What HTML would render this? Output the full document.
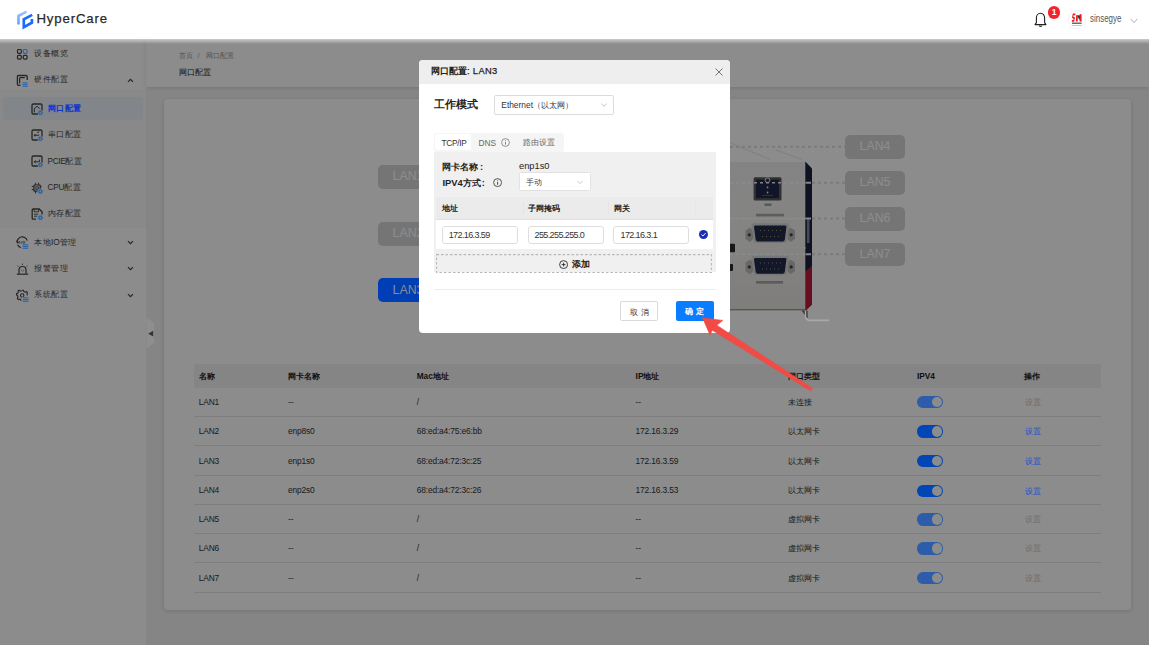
<!DOCTYPE html>
<html><head><meta charset="utf-8">
<style>
*{box-sizing:border-box;}
html,body{margin:0;padding:0;}
body{width:1149px;height:645px;overflow:hidden;position:relative;background:#f3f3f3;font-family:"Liberation Sans",sans-serif;color:#333;}
.abs{position:absolute;}
.t{position:absolute;white-space:nowrap;line-height:1;}
.ov{z-index:10;}
#sidebar{position:absolute;left:0;top:39px;width:146px;height:606px;background:#fff;}
.mi{position:absolute;font-size:8.3px;letter-spacing:0.55px;color:#444;white-space:nowrap;line-height:1;}
#crumb{position:absolute;left:146px;top:39px;width:1003px;box-shadow:0 1px 4px rgba(0,0,0,.12);height:48px;background:#fff;}
#card{position:absolute;left:164px;top:99px;width:967px;height:511px;background:#fff;border-radius:4px;box-shadow:0 1px 5px rgba(0,0,0,.14);}
.lanbtn{position:absolute;width:60px;height:23.5px;border-radius:5px;background:#d6d6d6;color:#fff;font-size:12.3px;line-height:23.5px;text-align:center;}
.th{position:absolute;top:364px;height:24px;left:194px;width:907px;background:#f2f2f2;}
.ht{position:absolute;font-size:8.3px;font-weight:bold;color:#222;white-space:nowrap;line-height:1;}
.td{position:absolute;font-size:8.4px;letter-spacing:-0.15px;color:#333;white-space:nowrap;line-height:1;}
.rl{position:absolute;left:194px;width:907px;height:1px;background:#e6e6e6;}
.sw{position:absolute;width:26.2px;height:12.6px;border-radius:6.3px;background:rgb(0,70,180);z-index:10;}
.sw:after{content:"";position:absolute;right:1.1px;top:1.1px;width:10.4px;height:10.4px;border-radius:50%;background:rgb(140,140,140);}
.sw.dis{background:rgb(45,92,170);}
.lnk{position:absolute;font-size:8.3px;color:rgb(25,80,200);white-space:nowrap;line-height:1;z-index:10;}
.lnkd{position:absolute;font-size:8.3px;color:#c8c8c8;white-space:nowrap;line-height:1;}
#mask{position:absolute;left:0;top:39px;width:1149px;height:606px;background:rgba(0,0,0,.45);z-index:5;}
#header{position:absolute;left:0;top:0;width:1149px;height:39px;background:#fff;z-index:20;}
#hshadow{position:absolute;left:0;top:39px;width:1149px;height:5px;background:linear-gradient(rgba(255,255,255,.55),rgba(255,255,255,0));z-index:6;}
#modal{position:absolute;left:419px;top:60px;width:311px;height:273px;background:#fff;border-radius:4px;overflow:hidden;z-index:20;}
#arrow{z-index:30;}
</style></head><body>
<div id="sidebar">
  <div class="abs" style="left:0;top:50px;width:146px;height:138.6px;background:#f9f9f9;"></div>
  <div class="abs" style="left:2.6px;top:58px;width:140.8px;height:23px;background:#edf2fc;border-radius:4px;"></div>
</div>
<div class="mi" style="left:34px;top:48.8px;">设备概览</div>
<div class="mi" style="left:34px;top:75.3px;">硬件配置</div>
<div class="mi ov" style="left:47.5px;top:103.8px;color:rgb(12,52,205);font-weight:bold;">网口配置</div>
<div class="mi" style="left:47.5px;top:130.3px;">串口配置</div>
<div class="mi" style="left:47.5px;top:156.6px;"><span style="letter-spacing:-0.35px">PCIE</span>配置</div>
<div class="mi" style="left:47.5px;top:182.9px;"><span style="letter-spacing:-0.3px">CPU</span>配置</div>
<div class="mi" style="left:47.5px;top:209.1px;">内存配置</div>
<div class="mi" style="left:34px;top:237.8px;">本地<span style="letter-spacing:-0.1px">IO</span>管理</div>
<div class="mi" style="left:34px;top:264.0px;">报警管理</div>
<div class="mi" style="left:34px;top:290.3px;">系统配置</div>
<!-- SIDEBAR ICONS -->
<svg class="abs ov" style="left:16px;top:47.5px;" width="13" height="13" viewBox="0 0 13 13">
 <rect x="1.5" y="1.5" width="3.8" height="3.8" rx="1" stroke="#262626" stroke-width="1.2" fill="none"/>
 <rect x="7.3" y="1.5" width="3.8" height="3.8" rx="1" stroke="#2a66ad" stroke-width="1.2" fill="none"/>
 <rect x="1.5" y="7.3" width="3.8" height="3.8" rx="1" stroke="#262626" stroke-width="1.2" fill="none"/>
 <rect x="7.3" y="7.3" width="3.8" height="3.8" rx="1" stroke="#262626" stroke-width="1.2" fill="none"/>
</svg>
<svg class="abs ov" style="left:16px;top:74px;" width="13" height="13" viewBox="0 0 13 13">
 <path d="M4.5 11.4H2.5Q1.4 11.4 1.4 10.3V2.6Q1.4 1.5 2.5 1.5H10.1Q11.2 1.5 11.2 2.6V6" stroke="#262626" stroke-width="1.3" fill="none"/>
 <path d="M3.6 9.6V4.6Q3.6 3.7 4.5 3.7H8.8" stroke="#262626" stroke-width="1.2" fill="none"/>
 <rect x="6" y="7.6" width="6.5" height="5" fill="rgb(140,140,140)"/><rect x="6.6" y="8.3" width="5" height="1.1" fill="#2a66ad"/><rect x="6.6" y="10.05" width="5" height="1.1" fill="#2a66ad"/><rect x="6.6" y="11.8" width="5" height="1.1" fill="#2a66ad"/>
</svg>
<svg class="abs ov" style="left:30.5px;top:102.5px;" width="13" height="13" viewBox="0 0 13 13">
 <rect x="1" y="1" width="10" height="10" rx="1.3" stroke="#262626" stroke-width="1.3" fill="none"/>
 <path d="M3.3 9.3V5.6L6 3.3L8.7 5.6" stroke="#262626" stroke-width="1" fill="none"/><circle cx="9.4" cy="9.7" r="2.9" fill="rgb(130,133,139)"/><circle cx="9.4" cy="9.7" r="1.45" fill="none" stroke="#2a66ad" stroke-width="1.3"/><circle cx="9.4" cy="9.7" r="2.2" fill="none" stroke="#2a66ad" stroke-width="0.9" stroke-dasharray="0.9 0.75"/>
</svg>
<svg class="abs ov" style="left:30.5px;top:128.8px;" width="13" height="13" viewBox="0 0 13 13">
 <rect x="1" y="1" width="10" height="10" rx="1.3" stroke="#262626" stroke-width="1.3" fill="none"/>
 <path d="M2.8 6.2H8.2M4 5V7.4M6.2 3.6L8.2 2.8" stroke="#262626" stroke-width="1" fill="none"/><circle cx="9.4" cy="9.7" r="2.9" fill="rgb(137,137,137)"/><circle cx="9.4" cy="9.7" r="1.45" fill="none" stroke="#2a66ad" stroke-width="1.3"/><circle cx="9.4" cy="9.7" r="2.2" fill="none" stroke="#2a66ad" stroke-width="0.9" stroke-dasharray="0.9 0.75"/>
</svg>
<svg class="abs ov" style="left:30.5px;top:155.3px;" width="13" height="13" viewBox="0 0 13 13">
 <rect x="1" y="1" width="10" height="10" rx="1.3" stroke="#262626" stroke-width="1.3" fill="none"/>
 <path d="M3.2 6.8H8.4V4.6M3.2 6.8L4.6 5.6M3.2 6.8L4.6 8" stroke="#262626" stroke-width="1" fill="none"/><circle cx="9.4" cy="9.7" r="2.9" fill="rgb(137,137,137)"/><circle cx="9.4" cy="9.7" r="1.45" fill="none" stroke="#2a66ad" stroke-width="1.3"/><circle cx="9.4" cy="9.7" r="2.2" fill="none" stroke="#2a66ad" stroke-width="0.9" stroke-dasharray="0.9 0.75"/>
</svg>
<svg class="abs ov" style="left:30.5px;top:181.5px;" width="13" height="13" viewBox="0 0 13 13">
 <rect x="3" y="3" width="6.2" height="6.2" rx="0.6" stroke="#262626" stroke-width="1.2" fill="none"/>
 <rect x="4.9" y="4.9" width="2.4" height="2.4" stroke="#262626" stroke-width="0.9" fill="none"/>
 <path d="M4.6 0.8V3M7.6 0.8V3M4.6 9.2V11.4M0.8 4.6H3M0.8 7.6H3M9.2 4.6H10.6" stroke="#262626" stroke-width="1" fill="none"/><circle cx="9.4" cy="9.6" r="2.9" fill="rgb(137,137,137)"/><circle cx="9.4" cy="9.6" r="1.45" fill="none" stroke="#2a66ad" stroke-width="1.3"/><circle cx="9.4" cy="9.6" r="2.2" fill="none" stroke="#2a66ad" stroke-width="0.9" stroke-dasharray="0.9 0.75"/>
</svg>
<svg class="abs ov" style="left:30.5px;top:207.5px;" width="13" height="13" viewBox="0 0 13 13">
 <path d="M5 11.2H2.2Q1.2 11.2 1.2 10.2V2Q1.2 1 2.2 1H8.2L11 3.8V6.5" stroke="#262626" stroke-width="1.3" fill="none"/>
 <path d="M3.2 1.2V3.8H7.6V1.2M3 6.2H7.2M3 8.2H6.2" stroke="#262626" stroke-width="0.9" fill="none"/><circle cx="9.4" cy="9.7" r="2.9" fill="rgb(137,137,137)"/><circle cx="9.4" cy="9.7" r="1.45" fill="none" stroke="#2a66ad" stroke-width="1.3"/><circle cx="9.4" cy="9.7" r="2.2" fill="none" stroke="#2a66ad" stroke-width="0.9" stroke-dasharray="0.9 0.75"/>
</svg>
<svg class="abs ov" style="left:16px;top:236px;" width="13" height="13" viewBox="0 0 13 13">
 <path d="M1.4 7.2A5 5 0 0 1 11.2 4.6" stroke="#262626" stroke-width="1.2" fill="none"/>
 <path d="M1.6 8.8A5 5 0 0 0 4.8 11.6" stroke="#262626" stroke-width="1.2" fill="none"/>
 <path d="M0.6 4.6L1.8 7.2L3.6 5.2" stroke="#262626" stroke-width="1" fill="none"/>
 <path d="M3.8 5.3V7.6M5.2 7.6L6 5.3M6.8 6.4A1 1 0 1 0 8.8 6.4A1 1 0 1 0 6.8 6.4" stroke="#262626" stroke-width="0.7" fill="none"/>
 <rect x="6" y="7.9" width="6.8" height="5" fill="rgb(137,137,137)"/>
 <rect x="6.6" y="8.2" width="5.6" height="1.1" fill="#2a66ad"/><rect x="6.6" y="9.95" width="5.6" height="1.1" fill="#2a66ad"/><rect x="6.6" y="11.7" width="5.6" height="1.1" fill="#2a66ad"/>
</svg>
<svg class="abs ov" style="left:16px;top:262.5px;" width="13" height="13" viewBox="0 0 13 13">
 <path d="M3 10.8V7A3.5 3.5 0 0 1 10 7V10.8" stroke="#262626" stroke-width="1.2" fill="none"/>
 <path d="M0.8 11.2H12.2" stroke="#262626" stroke-width="1.2" fill="none"/>
 <path d="M6.5 0.6V2M1.4 2.6L2.4 3.6M11.6 2.6L10.6 3.6" stroke="#262626" stroke-width="0.9" fill="none"/>
 <path d="M4.6 7.4Q6.5 5.4 8.4 7.4Q6.5 9.4 4.6 7.4Z" fill="#2a66ad"/><circle cx="6.5" cy="7.4" r="0.6" fill="rgb(137,137,137)"/>
</svg>
<svg class="abs ov" style="left:16px;top:288.5px;" width="13" height="13" viewBox="0 0 13 13">
 <path d="M5.6 1.2H7.4L7.8 2.6L9.2 3.2L10.5 2.5L11.6 3.8L10.9 5.1L11.4 6.4M5 11.8L4.8 10.6L3.6 10L2.3 10.6L1.3 9.3L2 8L1.6 6.6L0.5 6.1V4.5L1.9 4.1L2.4 2.9L1.8 1.8M1.8 1.8L3.1 1.2L4.2 2.2L5.4 1.9" stroke="#262626" stroke-width="1.1" fill="none" stroke-linejoin="round"/>
 <circle cx="6.2" cy="6.5" r="1.7" stroke="#262626" stroke-width="1.1" fill="none"/>
 <rect x="6.2" y="7.8" width="6.8" height="5.2" fill="rgb(137,137,137)"/>
 <rect x="6.9" y="8.3" width="5.6" height="1.1" fill="#2a66ad"/><rect x="6.9" y="10.05" width="5.6" height="1.1" fill="#2a66ad"/><rect x="6.9" y="11.8" width="5.6" height="1.1" fill="#2a66ad"/>
</svg>
<svg class="abs ov" style="left:126.5px;top:77.5px;" width="7" height="5" viewBox="0 0 7 5"><path d="M1 3.8L3.5 1.3L6 3.8" stroke="#262626" stroke-width="1.2" fill="none"/></svg>
<svg class="abs ov" style="left:126.5px;top:240px;" width="7" height="5" viewBox="0 0 7 5"><path d="M1 1.2L3.5 3.7L6 1.2" stroke="#262626" stroke-width="1.2" fill="none"/></svg>
<svg class="abs ov" style="left:126.5px;top:266.2px;" width="7" height="5" viewBox="0 0 7 5"><path d="M1 1.2L3.5 3.7L6 1.2" stroke="#262626" stroke-width="1.2" fill="none"/></svg>
<svg class="abs ov" style="left:126.5px;top:292.5px;" width="7" height="5" viewBox="0 0 7 5"><path d="M1 1.2L3.5 3.7L6 1.2" stroke="#262626" stroke-width="1.2" fill="none"/></svg>
<svg class="abs ov" style="left:146px;top:317px;" width="9" height="33" viewBox="0 0 9 33">
 <path d="M0.5 0L8 6V26L0.5 32Z" fill="rgb(142,142,142)"/>
 <path d="M2.2 16.8L7.2 13.8V19.4Z" fill="#333"/>
</svg>

<div id="crumb"></div>
<div class="t" style="left:179px;top:52px;font-size:7.2px;color:#999;">首页</div><div class="t" style="left:197.5px;top:52px;font-size:7.2px;color:#999;">/</div><div class="t" style="left:205.8px;top:52px;font-size:7.2px;color:#999;">网口配置</div>
<div class="t" style="left:179px;top:68px;font-size:8.3px;color:#222;">网口配置</div>
<div id="card"></div>
<div class="lanbtn" style="left:378px;top:165px;">LAN1</div>
<div class="lanbtn" style="left:378px;top:222px;">LAN2</div>
<div class="lanbtn ov" style="left:378px;top:278px;height:24px;line-height:24px;background:rgb(0,62,182);color:rgb(140,140,140);">LAN3</div>
<div class="lanbtn" style="left:845px;top:135px;">LAN4</div>
<div class="lanbtn" style="left:845px;top:171px;">LAN5</div>
<div class="lanbtn" style="left:845px;top:207px;">LAN6</div>
<div class="lanbtn" style="left:845px;top:242.5px;">LAN7</div>
<!-- DEVICE -->
<svg class="abs" style="left:700px;top:100px;" width="220" height="240" viewBox="700 100 220 240">
 <defs>
  <linearGradient id="pg" x1="0" y1="0" x2="0" y2="1"><stop offset="0" stop-color="#efefef"/><stop offset="0.5" stop-color="#f2f1ef"/><stop offset="1" stop-color="#e6e4e0"/></linearGradient>
  <radialGradient id="scr" cx="0.5" cy="0.5" r="0.5"><stop offset="0" stop-color="#555"/><stop offset="0.35" stop-color="#666"/><stop offset="0.45" stop-color="#ddd"/><stop offset="1" stop-color="#aaa"/></radialGradient>
 </defs>
 <path d="M731 143.2L770 159.5M776 150L802.4 159.5" stroke="#c6dcec" stroke-width="0.6" fill="none"/>
 <path d="M700 162H806V310.5H700Z" fill="url(#pg)"/>
 <path d="M700 309.6H806" stroke="#9a9a9a" stroke-width="1.2"/>
 <path d="M805.3 161.5L812 168.5V267L805.3 272Z" fill="#1c2240"/>
 <path d="M805.3 272L812 265.5V304.8L806 310.5H805.3Z" fill="#c01a3a"/>
   <rect x="753.6" y="177.3" width="27.9" height="23.2" rx="1.5" fill="#5a5a5a"/>
 <rect x="756" y="179.6" width="23" height="18.6" fill="#1e2848"/>
 <circle cx="767.5" cy="180.2" r="2.4" fill="none" stroke="#f2f2f2" stroke-width="0.9"/>
 <rect x="766.8" y="186.5" width="1.5" height="1.8" fill="#eee"/><rect x="766.8" y="191.6" width="1.5" height="1.8" fill="#eee"/>
 <path d="M762 195.5H773" stroke="#8fa0c0" stroke-width="0.4"/>
 <rect x="764.5" y="203.5" width="7" height="2.4" fill="#8a8a8a" opacity="0.8"/>
 <rect x="756" y="213.8" width="28" height="2.6" fill="#8a8a8a" opacity="0.7"/>
 <path d="M700 218.7H806" stroke="#fbfbfb" stroke-width="1"/>
 <path d="M700 248H806" stroke="#f4f4f4" stroke-width="0.8"/>
 <path d="M745.5 230.5L750 227.5L753 230.5V239L750 242L745.5 239Z" fill="#bdbdbd"/><circle cx="749.3" cy="234.8" r="1.6" fill="#444"/>
 <path d="M795 230.5L790.5 227.5L787.5 230.5V239L790.5 242L795 239Z" fill="#bdbdbd"/><circle cx="791.2" cy="234.8" r="1.6" fill="#444"/>
 <path d="M751.5 225.5Q751.5 223.2 754 223.2H786.5Q789 223.2 789 225.5L787 240.8Q786.6 243 784.2 243H756.3Q753.9 243 753.5 240.8Z" fill="#d8d8d8"/>
 <path d="M754 227Q754 225.6 755.6 225.6H785Q786.6 225.6 786.4 227L784.8 239.8Q784.5 241.5 782.8 241.5H757.8Q756 241.5 755.7 239.8Z" fill="#222c4e"/>
 <path d="M760 230.5H781M762 236.5H779" stroke="#b0a070" stroke-width="0.9" stroke-dasharray="1 3" fill="none"/>
 <path d="M745.5 262.6L750 259.6L753 262.6V271.2L750 274.2L745.5 271.2Z" fill="#bdbdbd"/><circle cx="749.3" cy="266.9" r="1.6" fill="#444"/>
 <path d="M795 262.6L790.5 259.6L787.5 262.6V271.2L790.5 274.2L795 271.2Z" fill="#bdbdbd"/><circle cx="791.2" cy="266.9" r="1.6" fill="#444"/>
 <path d="M751.5 258Q751.5 255.7 754 255.7H786.5Q789 255.7 789 258L787 273Q786.6 275.2 784.2 275.2H756.3Q753.9 275.2 753.5 273Z" fill="#d8d8d8"/>
 <path d="M754 259.5Q754 258.1 755.6 258.1H785Q786.6 258.1 786.4 259.5L784.8 272Q784.5 273.7 782.8 273.7H757.8Q756 273.7 755.7 272Z" fill="#222c4e"/>
 <path d="M760 263H781M762 269H779" stroke="#b0a070" stroke-width="0.9" stroke-dasharray="1 3" fill="none"/>
 <rect x="756" y="281" width="27" height="2.6" fill="#8a8a8a" opacity="0.7"/>
 <rect x="729" y="243.8" width="6" height="8.4" rx="1" fill="#2a2a2a"/><rect x="729" y="264" width="4" height="7" rx="1" fill="#2a2a2a"/>
 <rect x="806.9" y="218" width="2.6" height="25" fill="#c8c8d8" opacity="0.6"/>
 <path d="M700 146.8H845M812 182.7H845M812 218.5H845M812 254.3H845" stroke="#dedede" stroke-width="2" stroke-dasharray="3 3" fill="none"/>
 <path d="M700 182.7H805M700 218.5H805M700 254.3H805" stroke="#ffffff" stroke-width="1.6" stroke-dasharray="3 3" fill="none" opacity="0.9"/>
 <path d="M805.5 182.7H811M805.5 218.5H811M805.5 254.3H811" stroke="#f4f4f4" stroke-width="2" fill="none"/>
</svg>

<svg class="abs ov" style="left:795px;top:305px;" width="40" height="20" viewBox="795 305 40 20">
 <path d="M801.5 310.6L807.6 318.8V310.6Z" fill="#3a3a3a"/>
 <path d="M806.2 310.6V317.6L809 319.6H829.2V321.2H808.2L804.8 318.4V310.6Z" fill="rgb(168,168,166)"/>
</svg>
<div class="th"></div>
<div class="ht" style="left:198.7px;top:372px;">名称</div><div class="ht" style="left:288px;top:372px;">网卡名称</div><div class="ht" style="left:416.7px;top:372px;">Mac地址</div><div class="ht" style="left:635.6px;top:372px;">IP地址</div><div class="ht" style="left:788px;top:372px;">网口类型</div><div class="ht" style="left:917px;top:372px;">IPV4</div><div class="ht" style="left:1024.2px;top:372px;">操作</div><div class="rl" style="top:415.9px;"></div><div class="td" style="left:198.7px;top:397.7px;">LAN1</div><div class="td" style="left:288px;top:397.7px;">--</div><div class="td" style="left:416.7px;top:397.7px;">/</div><div class="td" style="left:635.6px;top:397.7px;">--</div><div class="td" style="left:788px;top:397.7px;">未连接</div><div class="sw dis" style="left:916.8px;top:395.8px;"></div><div class="lnkd" style="left:1024.6px;top:397.8px;">设置</div>
<div class="rl" style="top:445.0px;"></div><div class="td" style="left:198.7px;top:427.2px;">LAN2</div><div class="td" style="left:288px;top:427.2px;">enp8s0</div><div class="td" style="left:416.7px;top:427.2px;">68:ed:a4:75:e6:bb</div><div class="td" style="left:635.6px;top:427.2px;">172.16.3.29</div><div class="td" style="left:788px;top:427.2px;">以太网卡</div><div class="sw" style="left:916.8px;top:425.3px;"></div><div class="lnk" style="left:1024.6px;top:427.3px;">设置</div>
<div class="rl" style="top:475.0px;"></div><div class="td" style="left:198.7px;top:456.8px;">LAN3</div><div class="td" style="left:288px;top:456.8px;">enp1s0</div><div class="td" style="left:416.7px;top:456.8px;">68:ed:a4:72:3c:25</div><div class="td" style="left:635.6px;top:456.8px;">172.16.3.59</div><div class="td" style="left:788px;top:456.8px;">以太网卡</div><div class="sw" style="left:916.8px;top:454.9px;"></div><div class="lnk" style="left:1024.6px;top:456.9px;">设置</div>
<div class="rl" style="top:504.2px;"></div><div class="td" style="left:198.7px;top:486.4px;">LAN4</div><div class="td" style="left:288px;top:486.4px;">enp2s0</div><div class="td" style="left:416.7px;top:486.4px;">68:ed:a4:72:3c:26</div><div class="td" style="left:635.6px;top:486.4px;">172.16.3.53</div><div class="td" style="left:788px;top:486.4px;">以太网卡</div><div class="sw" style="left:916.8px;top:484.5px;"></div><div class="lnk" style="left:1024.6px;top:486.5px;">设置</div>
<div class="rl" style="top:532.9px;"></div><div class="td" style="left:198.7px;top:515.3px;">LAN5</div><div class="td" style="left:288px;top:515.3px;">--</div><div class="td" style="left:416.7px;top:515.3px;">/</div><div class="td" style="left:635.6px;top:515.3px;">--</div><div class="td" style="left:788px;top:515.3px;">虚拟网卡</div><div class="sw dis" style="left:916.8px;top:513.4px;"></div><div class="lnkd" style="left:1024.6px;top:515.4px;">设置</div>
<div class="rl" style="top:562.1px;"></div><div class="td" style="left:198.7px;top:544.3px;">LAN6</div><div class="td" style="left:288px;top:544.3px;">--</div><div class="td" style="left:416.7px;top:544.3px;">/</div><div class="td" style="left:635.6px;top:544.3px;">--</div><div class="td" style="left:788px;top:544.3px;">虚拟网卡</div><div class="sw dis" style="left:916.8px;top:542.4px;"></div><div class="lnkd" style="left:1024.6px;top:544.4px;">设置</div>
<div class="rl" style="top:591.7px;"></div><div class="td" style="left:198.7px;top:573.7px;">LAN7</div><div class="td" style="left:288px;top:573.7px;">--</div><div class="td" style="left:416.7px;top:573.7px;">/</div><div class="td" style="left:635.6px;top:573.7px;">--</div><div class="td" style="left:788px;top:573.7px;">虚拟网卡</div><div class="sw dis" style="left:916.8px;top:571.8px;"></div><div class="lnkd" style="left:1024.6px;top:573.8px;">设置</div>
<div id="mask"></div>
<div id="hshadow"></div>
<!-- HEADER -->
<div id="header">
  <svg class="abs" style="left:14px;top:8px;" width="22" height="23" viewBox="14 8 22 23">
    <defs><linearGradient id="lg1" x1="0" y1="0" x2="0" y2="1"><stop offset="0" stop-color="#9cc4ff"/><stop offset="1" stop-color="#5e9dff"/></linearGradient></defs>
    <path d="M18.5 24.6V15.9L26.6 11.6" stroke="url(#lg1)" stroke-width="2.6" fill="none" stroke-linejoin="miter"/>
    <path d="M32.2 14.9L23.8 19.3V27.2L31.9 22.8V19.1" stroke="#1a6cff" stroke-width="2.7" fill="none" stroke-linejoin="miter"/>
  </svg>
  <div class="t" style="left:36.5px;top:11.5px;font-size:13.2px;color:#2a2a2a;letter-spacing:0.85px;-webkit-text-stroke:0.25px #2a2a2a;">HyperCare</div>
  <svg class="abs" style="left:1034px;top:12px;" width="13" height="16" viewBox="0 0 13 16">
    <path d="M6.5 1.2C4 1.2 2.4 3.2 2.4 5.8V10.6L1 12.6H12L10.6 10.6V5.8C10.6 3.2 9 1.2 6.5 1.2Z" stroke="#222" stroke-width="1.1" fill="none" stroke-linejoin="round"/>
    <path d="M5.2 13.6Q6.5 15.2 7.8 13.6" stroke="#222" stroke-width="1.1" fill="none"/>
  </svg>
  <div class="abs" style="left:1048px;top:6.3px;width:12.3px;height:12.3px;border-radius:50%;background:#f5222d;"></div>
  <div class="t" style="left:1048px;top:8.4px;width:12.3px;text-align:center;font-size:8.6px;font-weight:bold;color:#fff;">1</div>
  <div class="abs" style="left:1067.5px;top:10.4px;width:18.3px;height:18.3px;border-radius:50%;background:#fff;border:0.5px solid #f3f3f3;"></div>
  <svg class="abs" style="left:1068px;top:10px;" width="18" height="18" viewBox="1068 10 18 18">
    <path d="M1075.6 13.4L1075.2 15.2H1073.6L1073.2 16.6L1075 17.4L1074.2 21.8H1071.6L1072 20H1073.4L1073.6 18.8L1072 18L1072.8 13.4Z" fill="#ee1c25"/>
    <path d="M1076.2 15.6H1077.6L1078.8 19.6V15.6H1078.2Z" fill="#222"/>
    <path d="M1076 15.2H1077.8V21.6H1076Z" fill="#ee1c25"/>
    <path d="M1079.6 14.2H1081.6V21.6H1079.6Z" fill="#ee1c25"/>
    <path d="M1077.6 15.4L1079.8 20.2V15.4Z" fill="#222"/>
    <rect x="1072" y="22.6" width="9.6" height="1.2" fill="#444"/>
    <rect x="1072" y="25.2" width="9.6" height="0.8" fill="#f7a0a0"/>
  </svg>
  <div class="t" style="left:1089.5px;top:13.6px;font-size:10.2px;color:#555;transform:scaleX(0.78);transform-origin:0 0;">sinsegye</div>
  <svg class="abs" style="left:1130px;top:18px;" width="8" height="6" viewBox="0 0 8 6"><path d="M0.5 0.8L4 4.6L7.5 0.8" stroke="#999" stroke-width="0.8" fill="none"/></svg>
</div>

<!-- MODAL -->
<div id="modal">
  <div class="abs" style="left:0;top:0;width:311px;height:23.5px;background:#eeeeee;"></div>
  <div class="t" style="left:12px;top:6.9px;font-size:9.3px;color:#222;"><b>网口配置</b><span style="letter-spacing:0.35px;-webkit-text-stroke:0.25px #222;">: LAN3</span></div>
  <svg class="abs" style="left:295.5px;top:8px;" width="8" height="8" viewBox="0 0 8 8"><path d="M0.5 0.5L7.5 7.5M7.5 0.5L0.5 7.5" stroke="#666" stroke-width="0.9" fill="none"/></svg>
  <div class="t" style="left:14.5px;top:39px;font-size:10.55px;font-weight:bold;color:#222;">工作模式</div>
  <div class="abs" style="left:75px;top:35px;width:120px;height:19.5px;border:1px solid #dcdcdc;border-radius:2px;"></div>
  <div class="t" style="left:82.3px;top:40.5px;font-size:8.4px;color:#333;">Ethernet（以太网）</div>
  <svg class="abs" style="left:182px;top:42.5px;" width="6" height="4" viewBox="0 0 6 4"><path d="M0.3 0.5L3 3.3L5.7 0.5" stroke="#aaa" stroke-width="0.7" fill="none"/></svg>

  <div class="abs" style="left:14.6px;top:72.7px;width:130px;height:19px;background:#f5f5f5;border-radius:3px;"></div>
  <div class="abs" style="left:15.7px;top:73.8px;width:36.7px;height:16.4px;background:#fff;border-radius:2px;"></div>
  <div class="t" style="left:22.4px;top:78.5px;font-size:8.3px;color:#333;letter-spacing:-0.25px;">TCP/IP</div>
  <div class="t" style="left:59.6px;top:78.5px;font-size:8.3px;color:#666;">DNS</div>
  <svg class="abs" style="left:81.9px;top:77.5px;" width="9" height="9" viewBox="0 0 9 9"><circle cx="4.5" cy="4.5" r="3.9" stroke="#777" stroke-width="0.8" fill="none"/><path d="M4.5 3.8V6.6M4.5 2.3V3" stroke="#777" stroke-width="0.9"/></svg>
  <div class="t" style="left:103.5px;top:78px;font-size:8.3px;color:#666;">路由设置</div>

  <div class="abs" style="left:14.6px;top:91.5px;width:282.3px;height:120.8px;background:#f0f0f0;"></div>
  <div class="t" style="left:23.4px;top:101.5px;font-size:9.4px;font-weight:bold;color:#222;">网卡名称<span style="margin-left:1.5px">:</span></div>
  <div class="t" style="left:100px;top:101.5px;font-size:9.3px;color:#222;">enp1s0</div>
  <div class="t" style="left:23.4px;top:118.3px;font-size:9.4px;font-weight:bold;color:#222;">IPV4方式<span style="margin-left:1px">:</span></div>
  <svg class="abs" style="left:73.8px;top:118.3px;" width="9.2" height="9.2" viewBox="0 0 9 9"><circle cx="4.5" cy="4.5" r="3.9" stroke="#333" stroke-width="0.8" fill="none"/><path d="M4.5 3.8V6.6M4.5 2.3V3" stroke="#333" stroke-width="0.9"/></svg>
  <div class="abs" style="left:100.3px;top:112.3px;width:71.5px;height:19.2px;background:#fff;border:1px solid #e2e2e2;border-radius:1.5px;"></div>
  <div class="t" style="left:107px;top:118.3px;font-size:8.3px;color:#444;">手动</div>
  <svg class="abs" style="left:158.3px;top:120px;" width="6.2" height="4.4" viewBox="0 0 6 4"><path d="M0.3 0.5L3 3.3L5.7 0.5" stroke="#bbb" stroke-width="0.7" fill="none"/></svg>

  <div class="abs" style="left:17.2px;top:137.4px;width:276.8px;height:22.6px;background:#ebebeb;border-bottom:1px solid #e0e0e0;"></div>
  <div class="abs" style="left:103.5px;top:142px;width:1px;height:13px;background:#e6e6e6;"></div>
  <div class="abs" style="left:189px;top:142px;width:1px;height:13px;background:#e6e6e6;"></div>
  <div class="abs" style="left:276px;top:142px;width:1px;height:13px;background:#e6e6e6;"></div>
  <div class="t" style="left:22.5px;top:144.5px;font-size:8.2px;font-weight:bold;color:#222;">地址</div>
  <div class="t" style="left:108.7px;top:144.5px;font-size:8.2px;font-weight:bold;color:#222;">子网掩码</div>
  <div class="t" style="left:194.7px;top:144.5px;font-size:8.2px;font-weight:bold;color:#222;">网关</div>
  <div class="abs" style="left:17.2px;top:160px;width:276.8px;height:29.3px;background:#fff;"></div>
  <div class="abs" style="left:22.5px;top:166px;width:76px;height:18.4px;border:1px solid #dedede;border-radius:3px;background:#fff;"></div>
  <div class="abs" style="left:108.6px;top:166px;width:76px;height:18.4px;border:1px solid #dedede;border-radius:3px;background:#fff;"></div>
  <div class="abs" style="left:194.3px;top:166px;width:76px;height:18.4px;border:1px solid #dedede;border-radius:3px;background:#fff;"></div>
  <div class="t" style="left:29.7px;top:171.3px;font-size:9px;letter-spacing:-0.6px;color:#333;">172.16.3.59</div>
  <div class="t" style="left:115.5px;top:171.3px;font-size:9px;letter-spacing:-0.6px;color:#333;">255.255.255.0</div>
  <div class="t" style="left:201.5px;top:171.3px;font-size:9px;letter-spacing:-0.6px;color:#333;">172.16.3.1</div>
  <svg class="abs" style="left:280.1px;top:169.8px;" width="9" height="9" viewBox="0 0 9 9"><circle cx="4.5" cy="4.5" r="4.5" fill="#1a2db8"/><path d="M2.4 4.6L3.9 6L6.6 3.1" stroke="#fff" stroke-width="1" fill="none"/></svg>

  <svg class="abs" style="left:17.2px;top:193.5px;" width="276" height="19" viewBox="0 0 276 19"><rect x="0.5" y="0.5" width="275" height="18" fill="none" stroke="#b9b9b9" stroke-width="1.25" stroke-dasharray="2.6 1.9"/></svg>
  <svg class="abs" style="left:139.8px;top:200.2px;" width="9.2" height="9.2" viewBox="0 0 9 9"><circle cx="4.5" cy="4.5" r="3.9" stroke="#222" stroke-width="0.85" fill="none"/><path d="M2.6 4.5H6.4M4.5 2.6V6.4" stroke="#222" stroke-width="0.85"/></svg>
  <div class="t" style="left:152.7px;top:200.3px;font-size:9.3px;font-weight:bold;color:#222;">添加</div>

  <div class="abs" style="left:14.6px;top:229px;width:282.3px;height:1px;background:#ececec;"></div>
  <div class="abs" style="left:201px;top:241.3px;width:37.8px;height:19.5px;border:1px solid #d9d9d9;border-radius:2px;"></div>
  <div class="t" style="left:211px;top:248.5px;font-size:8.2px;color:#333;letter-spacing:2.5px;">取消</div>
  <div class="abs" style="left:256.8px;top:241.3px;width:38.2px;height:19.5px;background:#0a7cff;border-radius:2px;"></div>
  <div class="t" style="left:266px;top:248px;font-size:8.2px;color:#fff;font-weight:bold;letter-spacing:2.5px;">确定</div>
</div>

<svg id="arrow" class="abs" style="left:690px;top:300px;" width="140" height="100" viewBox="690 300 140 100">
 <path d="M702.5 317.8L722.8 320.4L716.8 325.2L812.4 388.2L810.6 390.8L712.3 330.3L710 335Z" fill="#f24a45" stroke="#f24a45" stroke-width="0.6" stroke-linejoin="round"/>
</svg>
</body></html>
